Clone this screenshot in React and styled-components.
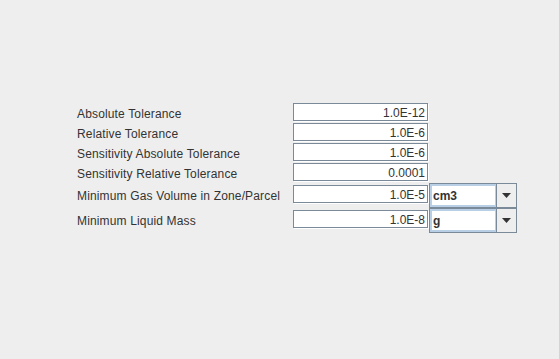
import React from 'react'
import styled, { createGlobalStyle } from 'styled-components'

const Global = createGlobalStyle`
  html, body {
    margin: 0;
    background: #eeeeee;
  }
  body {
    width: 559px;
    height: 359px;
    overflow: hidden;
    font-family: "Liberation Sans", Arial, sans-serif;
  }
`;

const Page = styled.div`
  padding: 103px 0 0 77px;
`;

const Form = styled.div`
  display: grid;
  grid-template-columns: 216px 136px 88px;
  grid-auto-rows: 20px;
`;

const Row = styled.div`
  display: contents;
`;

const Label = styled.div`
  grid-column: 1;
  height: ${p => (p.tall ? 25 : 20)}px;
  display: flex;
  align-items: center;
  font-size: 12px;
  letter-spacing: 0.15px;
  color: #333333;
  white-space: nowrap;
  padding-top: 1px;
  box-sizing: border-box;
`;

const FieldCell = styled.div`
  grid-column: 2;
  padding-top: ${p => (p.tall ? 2 : 0)}px;
`;

const Field = styled.div`
  width: 135px;
  height: 18px;
  box-sizing: border-box;
  border: 1px solid #7a8a99;
  box-shadow: 1px 1px 0 #ffffff;
  background: #ffffff;
  font-size: 12px;
  color: #333333;
  display: flex;
  align-items: center;
  justify-content: flex-end;
  padding: 1px 2px 0 0;
`;

const Combo = styled.div`
  grid-column: 3;
  width: 88px;
  height: 25px;
  box-sizing: border-box;
  border: 1px solid #7a8a99;
  display: flex;
`;

const ComboEditor = styled.div`
  flex: 1;
  background: #ffffff;
  border: 2px solid #b8cfe5;
  border-right-width: 1px;
  box-sizing: border-box;
  font-size: 12px;
  font-weight: bold;
  color: #333333;
  display: flex;
  align-items: center;
  padding: 1px 0 0 1px;
`;

const ArrowButton = styled.div`
  width: 19px;
  border-left: 1px solid #7a8a99;
  background: #eeeeee;
  display: flex;
  align-items: center;
  justify-content: center;
`;

const Arrow = () => (
  <svg width="9" height="5" viewBox="0 0 9 5">
    <path d="M0 0 H9 L4.5 5 Z" fill="#333333" />
  </svg>
)

const rows = [
  { label: 'Absolute Tolerance', value: '1.0E-12' },
  { label: 'Relative Tolerance', value: '1.0E-6' },
  { label: 'Sensitivity Absolute Tolerance', value: '1.0E-6' },
  { label: 'Sensitivity Relative Tolerance', value: '0.0001' },
  { label: 'Minimum Gas Volume in Zone/Parcel', value: '1.0E-5', unit: 'cm3' },
  { label: 'Minimum Liquid Mass', value: '1.0E-8', unit: 'g' },
]

export default function App() {
  return (
    <Page>
      <Global />
      <Form style={{ gridTemplateRows: rows.map(r => (r.unit ? '25px' : '20px')).join(' ') }}>
        {rows.map(r => (
          <Row key={r.label}>
            <Label tall={!!r.unit}>{r.label}</Label>
            <FieldCell tall={!!r.unit}>
              <Field>{r.value}</Field>
            </FieldCell>
            {r.unit && (
              <Combo>
                <ComboEditor>{r.unit}</ComboEditor>
                <ArrowButton><Arrow /></ArrowButton>
              </Combo>
            )}
          </Row>
        ))}
      </Form>
    </Page>
  )
}
